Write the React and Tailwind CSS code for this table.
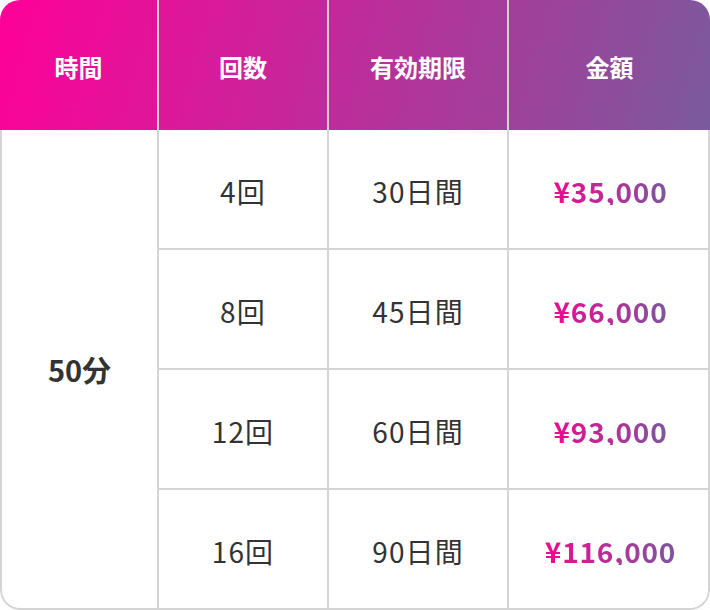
const rows = [
  { count: "4回", term: "30日間", price: "¥35,000" },
  { count: "8回", term: "45日間", price: "¥66,000" },
  { count: "12回", term: "60日間", price: "¥93,000" },
  { count: "16回", term: "90日間", price: "¥116,000" },
];

const font = { fontFamily: '"Noto Sans CJK JP", "Noto Sans", sans-serif' };

export default function App() {
  return (
    <div className="w-[710px] h-[610px] bg-white" style={font}>
      <div className="w-[710px] h-[610px] rounded-[20px] overflow-hidden">
        {/* Header */}
        <div className="grid grid-cols-[159px_170px_180px_1fr] h-[130px] bg-[linear-gradient(105deg,#ff0099_0%,#7a5a9c_100%)] text-white font-bold text-[24px] leading-none">
          <div className="flex items-center justify-center pt-1 border-r-2 border-[#d0d0d0]">時間</div>
          <div className="flex items-center justify-center pt-1 border-r-2 border-[#d0d0d0]">回数</div>
          <div className="flex items-center justify-center pt-1 border-r-2 border-[#d0d0d0]">有効期限</div>
          <div className="flex items-center justify-center pt-1">金額</div>
        </div>

        {/* Body */}
        <div className="grid grid-cols-[157px_170px_180px_1fr] grid-rows-[120px_120px_120px_118px] border-x-2 border-b-2 border-[#d4d4d4] rounded-b-[20px] text-[#333]">
          <div className="row-span-4 flex items-center justify-center border-r-2 border-[#d4d4d4] text-[29px] font-bold leading-none">
            50分
          </div>
          {rows.map((r, i) => {
            const last = i === rows.length - 1;
            const b = last ? "" : "border-b-2";
            return [
              <div key={`c${i}`} className={`flex items-center justify-center pt-1 border-r-2 border-[#d4d4d4] text-[28px] leading-none tracking-[0.04em] ${b}`}>
                {r.count}
              </div>,
              <div key={`t${i}`} className={`flex items-center justify-center pt-1 border-r-2 border-[#d4d4d4] text-[28px] leading-none tracking-[0.04em] ${b}`}>
                {r.term}
              </div>,
              <div key={`p${i}`} className={`flex items-center justify-center pt-1 pl-1 border-[#d4d4d4] ${b}`}>
                <span className="bg-[linear-gradient(90deg,#f0088f,#7b57a0)] bg-clip-text text-transparent text-[28px] font-bold leading-none tracking-[0.03em]">
                  {r.price}
                </span>
              </div>,
            ];
          })}
        </div>
      </div>
    </div>
  );
}
